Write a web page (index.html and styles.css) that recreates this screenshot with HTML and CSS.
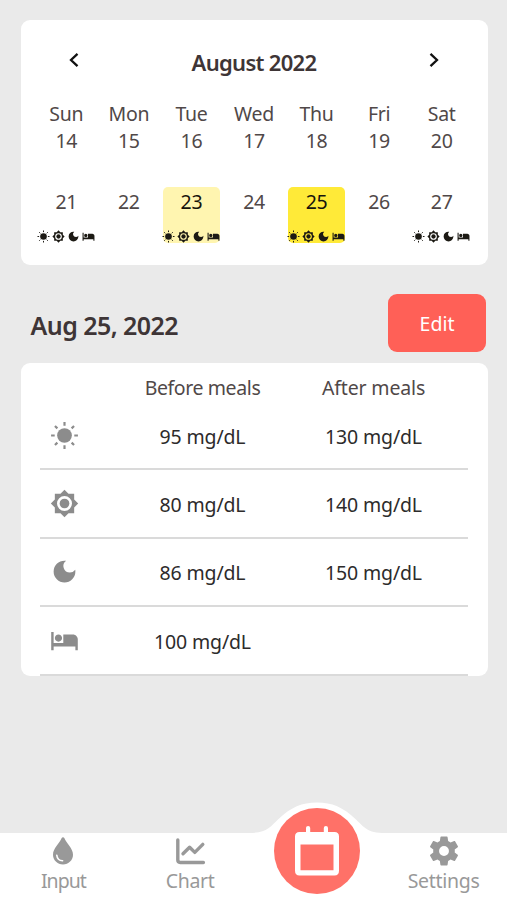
FILE: index.html
```html
<!DOCTYPE html>
<html lang="en">
<head>
<meta charset="utf-8">
<title>Blood glucose calendar</title>
<link rel="stylesheet" href="styles.css">
</head>
<body>
<svg class="defs" aria-hidden="true">
  <symbol id="sun" viewBox="0 0 24 24"><circle cx="12" cy="12" r="6.1"/><path d="M12 .9v3M12 20.1v3M.9 12h3M20.1 12h3M4.1 4.1l2 2M17.9 17.9l2 2M4.1 19.9l2-2M17.9 6.1l2-2" fill="none" stroke="currentColor" stroke-width="1.8"/></symbol>
  <symbol id="noon" viewBox="0 0 24 24"><path fill-rule="evenodd" d="M20 15.31 23.31 12 20 8.69V4h-4.69L12 .69 8.69 4H4v4.69L.69 12 4 15.31V20h4.69L12 23.31 15.31 20H20zM12 18.2a6.2 6.2 0 1 1 0-12.4 6.2 6.2 0 0 1 0 12.4z"/><circle cx="12" cy="12" r="4"/></symbol>
  <symbol id="moon" viewBox="0 0 24 24"><path d="M12 3a9 9 0 1 0 9 9c0-.46-.04-.92-.1-1.36a5.389 5.389 0 0 1-4.4 2.26 5.403 5.403 0 0 1-3.14-9.8c-.44-.06-.9-.1-1.36-.1z"/></symbol>
  <symbol id="bed" viewBox="0 0 24 24"><path d="M7 13c1.66 0 3-1.34 3-3S8.66 7 7 7s-3 1.34-3 3 1.34 3 3 3zm12-6h-8v7H3V5H1v15h2v-3h18v3h2v-9c0-2.21-1.79-4-4-4z"/></symbol>
</svg>
<main class="screen">
  <section class="card calendar">
    <header class="month">
      <svg class="arrow" viewBox="0 0 18 18"><path d="M12.500 2.800 6 9l6.500 6.200"/></svg>
      <h1>August 2022</h1>
      <svg class="arrow" viewBox="0 0 18 18"><path d="M5.500 2.800 12 9l-6.500 6.200"/></svg>
    </header>
    <div class="week names"><span>Sun</span><span>Mon</span><span>Tue</span><span>Wed</span><span>Thu</span><span>Fri</span><span>Sat</span></div>
    <div class="week first"><span>14</span><span>15</span><span>16</span><span>17</span><span>18</span><span>19</span><span>20</span></div>
    <div class="week days">
      <div class="day"><span>21</span><div class="marks"><svg><use href="#sun"/></svg><svg><use href="#noon"/></svg><svg><use href="#moon"/></svg><svg><use href="#bed"/></svg></div></div>
      <div class="day"><span>22</span></div>
      <div class="day today"><span>23</span><div class="marks"><svg><use href="#sun"/></svg><svg><use href="#noon"/></svg><svg><use href="#moon"/></svg><svg><use href="#bed"/></svg></div></div>
      <div class="day"><span>24</span></div>
      <div class="day selected"><span>25</span><div class="marks"><svg><use href="#sun"/></svg><svg><use href="#noon"/></svg><svg><use href="#moon"/></svg><svg><use href="#bed"/></svg></div></div>
      <div class="day"><span>26</span></div>
      <div class="day"><span>27</span><div class="marks"><svg><use href="#sun"/></svg><svg><use href="#noon"/></svg><svg><use href="#moon"/></svg><svg><use href="#bed"/></svg></div></div>
    </div>
  </section>
  <div class="heading"><h2>Aug 25, 2022</h2><button class="edit">Edit</button></div>
  <section class="card readings">
    <div class="row head"><span></span><span>Before meals</span><span>After meals</span></div>
    <div class="row"><svg><use href="#sun"/></svg><span>95 mg/dL</span><span>130 mg/dL</span></div>
    <div class="row"><svg><use href="#noon"/></svg><span>80 mg/dL</span><span>140 mg/dL</span></div>
    <div class="row"><svg><use href="#moon"/></svg><span>86 mg/dL</span><span>150 mg/dL</span></div>
    <div class="row"><svg><use href="#bed"/></svg><span>100 mg/dL</span><span></span></div>
  </section>
</main>
<nav class="tabs">
  <a class="tab"><svg viewBox="0 0 32 32"><path d="M16 2.200c.6 0 1 .3 1.300.9C19.500 8.500 26 13.500 26 19.700c0 5.400-4.400 9.700-10 9.700S6 25.100 6 19.700C6 13.500 12.500 8.500 14.700 3.100c.3-.6.7-.9 1.300-.9z"/><path class="shine" d="M9.800 20.200c.3 3.200 2.700 5.400 5.800 5.600"/></svg><span class="tight">Input</span></a>
  <a class="tab"><svg class="line" viewBox="0 0 32 32"><path d="M3.800 4.900v20.200q0 2.400 2.400 2.400h23.200M9 18.800l6.600-6.600 5.200 5.200 8-8"/></svg><span>Chart</span></a>
  <a class="tab current" aria-label="Calendar">
    <svg class="bump" viewBox="0 0 136 32"><path d="M0 31C18 31 21 25 29 17.500 42 5 53 .5 68 .5s26 4.500 39 17C115 25 118 31 136 31v1H0z"/></svg>
    <span class="disc"><svg viewBox="0 0 44 50"><path fill-rule="evenodd" d="M4.500 6H11V2q0-2 2.100-2t2.100 2v4h13.600V2q0-2 2.100-2T33 2v4h6.500Q44 6 44 10.500v34.300q0 4.700-4.500 4.700h-35Q0 49.500 0 44.800V10.500Q0 6 4.500 6zM5.500 18.500v25.700h33V18.500z"/></svg></span>
  </a>
  <a class="tab"><svg class="gear" viewBox="0 0 24 24"><path d="M19.140 12.940c.04-.3.06-.61.06-.94 0-.32-.02-.64-.07-.94l2.030-1.580c.18-.14.23-.41.12-.61l-1.920-3.320c-.12-.22-.37-.29-.59-.22l-2.390.96c-.5-.38-1.030-.7-1.620-.94l-.36-2.540c-.04-.24-.24-.41-.48-.41h-3.840c-.24 0-.43.17-.47.41l-.36 2.540c-.59.24-1.130.57-1.620.94l-2.390-.96c-.22-.08-.47 0-.59.22L2.740 8.870c-.12.21-.08.47.12.61l2.030 1.580c-.05.3-.09.63-.09.94s.02.64.07.94l-2.030 1.580c-.18.14-.23.41-.12.61l1.920 3.320c.12.22.37.29.59.22l2.390-.96c.5.38 1.030.7 1.620.94l.36 2.540c.05.24.24.41.48.41h3.840c.24 0 .44-.17.47-.41l.36-2.540c.59-.24 1.130-.56 1.620-.94l2.390.96c.22.08.47 0 .59-.22l1.920-3.320c.12-.22.07-.47-.12-.61l-2.010-1.580zM12 15.300a3.300 3.300 0 1 1 0-6.600 3.300 3.300 0 0 1 0 6.600z"/></svg><span>Settings</span></a>
</nav>
</body>
</html>
```
FILE: styles.css
```css
* { box-sizing: border-box; }
body {
  margin: 0;
  width: 507px;
  height: 900px;
  display: flex;
  flex-direction: column;
  overflow: hidden;
  background: #eaeaea;
  color: #504848;
  font: 19.5px/28px "Noto Sans", sans-serif;
}
svg { display: block; fill: currentColor; }
.defs { position: absolute; width: 0; height: 0; }
h1, h2 { margin: 0; font-weight: 600; color: #3e3536; }
.screen { flex: 1; padding: 20px 19.5px 0 20.5px; }
.card { background: #fff; border-radius: 9px; }

.calendar { height: 245px; padding: 22px 14.5px 0; }
.month { display: flex; justify-content: space-between; align-items: center; height: 40px; padding: 0 30px; }
.month h1 { font-size: 22px; letter-spacing: -.7px; padding-bottom: 1px; }
.arrow { width: 18px; height: 18px; margin-top: -5px; fill: none; stroke: #111; stroke-width: 2.3; }
.week { display: grid; grid-template-columns: repeat(7, 1fr); text-align: center; }
.names { margin-top: 18px; letter-spacing: -.3px; }
.first { margin-top: -1px; letter-spacing: -.3px; }
.days { margin-top: 31.5px; }
.day { width: 57.5px; height: 56px; margin: 0 auto; padding-top: 1px; border-radius: 5px; letter-spacing: -.3px; }
.today { background: #fff5b0; color: #17140c; }
.selected { background: #ffea38; color: #17140c; }
.marks { display: flex; gap: 2px; margin: 14px -.5px 0; color: #1c1a14; }
.marks svg { width: 13px; height: 13px; flex: none; }

.heading { display: flex; justify-content: space-between; align-items: center; height: 98px; padding: 18px 1.5px 0 10px; }
.heading h2 { font-size: 25px; letter-spacing: -.55px; padding-top: 3px; }
.edit { width: 98px; height: 58px; border: 0; border-radius: 9px; background: #ff6057; color: #fff; font: inherit; padding: 2px 0 0; }

.readings { height: 312.5px; padding: 11px 19.5px 0; }
.row { display: grid; grid-template-columns: 49px 227px 115px; align-items: center; height: 68.4px; border-bottom: 2px solid #dadada; color: #2d2b2b; text-align: center; white-space: nowrap; letter-spacing: -.15px; }
.row span { padding-top: 3px; }
.row svg { width: 29px; height: 29px; justify-self: center; color: #8c8c8c; }
.head { height: 28px; border: 0; color: #504848; letter-spacing: -.4px; }
.head span { padding-top: 0; }
.head span:last-child { letter-spacing: -.15px; }

.tabs { display: grid; grid-template-columns: repeat(4, 1fr); height: 67px; background: #fff; color: #999; }
.tab { position: relative; display: flex; flex-direction: column; align-items: center; padding-top: 2px; letter-spacing: -.3px; }
.tab .tight { letter-spacing: -1px; }
.tab > svg { width: 32px; height: 32px; }
.tab .shine { fill: none; stroke: #fff; stroke-width: 1.6; stroke-linecap: round; }
.tab .line { fill: none; stroke: currentColor; stroke-width: 3.4; stroke-linecap: round; stroke-linejoin: round; }
.tab .gear { width: 36px; height: 36px; margin: -2px 0; }
.tab .bump { position: absolute; width: 136px; height: 32px; top: -31px; color: #fff; }
.disc { position: absolute; top: -25px; width: 86px; height: 86px; border-radius: 50%; background: #ff7168; color: #fff; display: grid; place-items: center; }
.disc svg { width: 44px; height: 50px; }
```
